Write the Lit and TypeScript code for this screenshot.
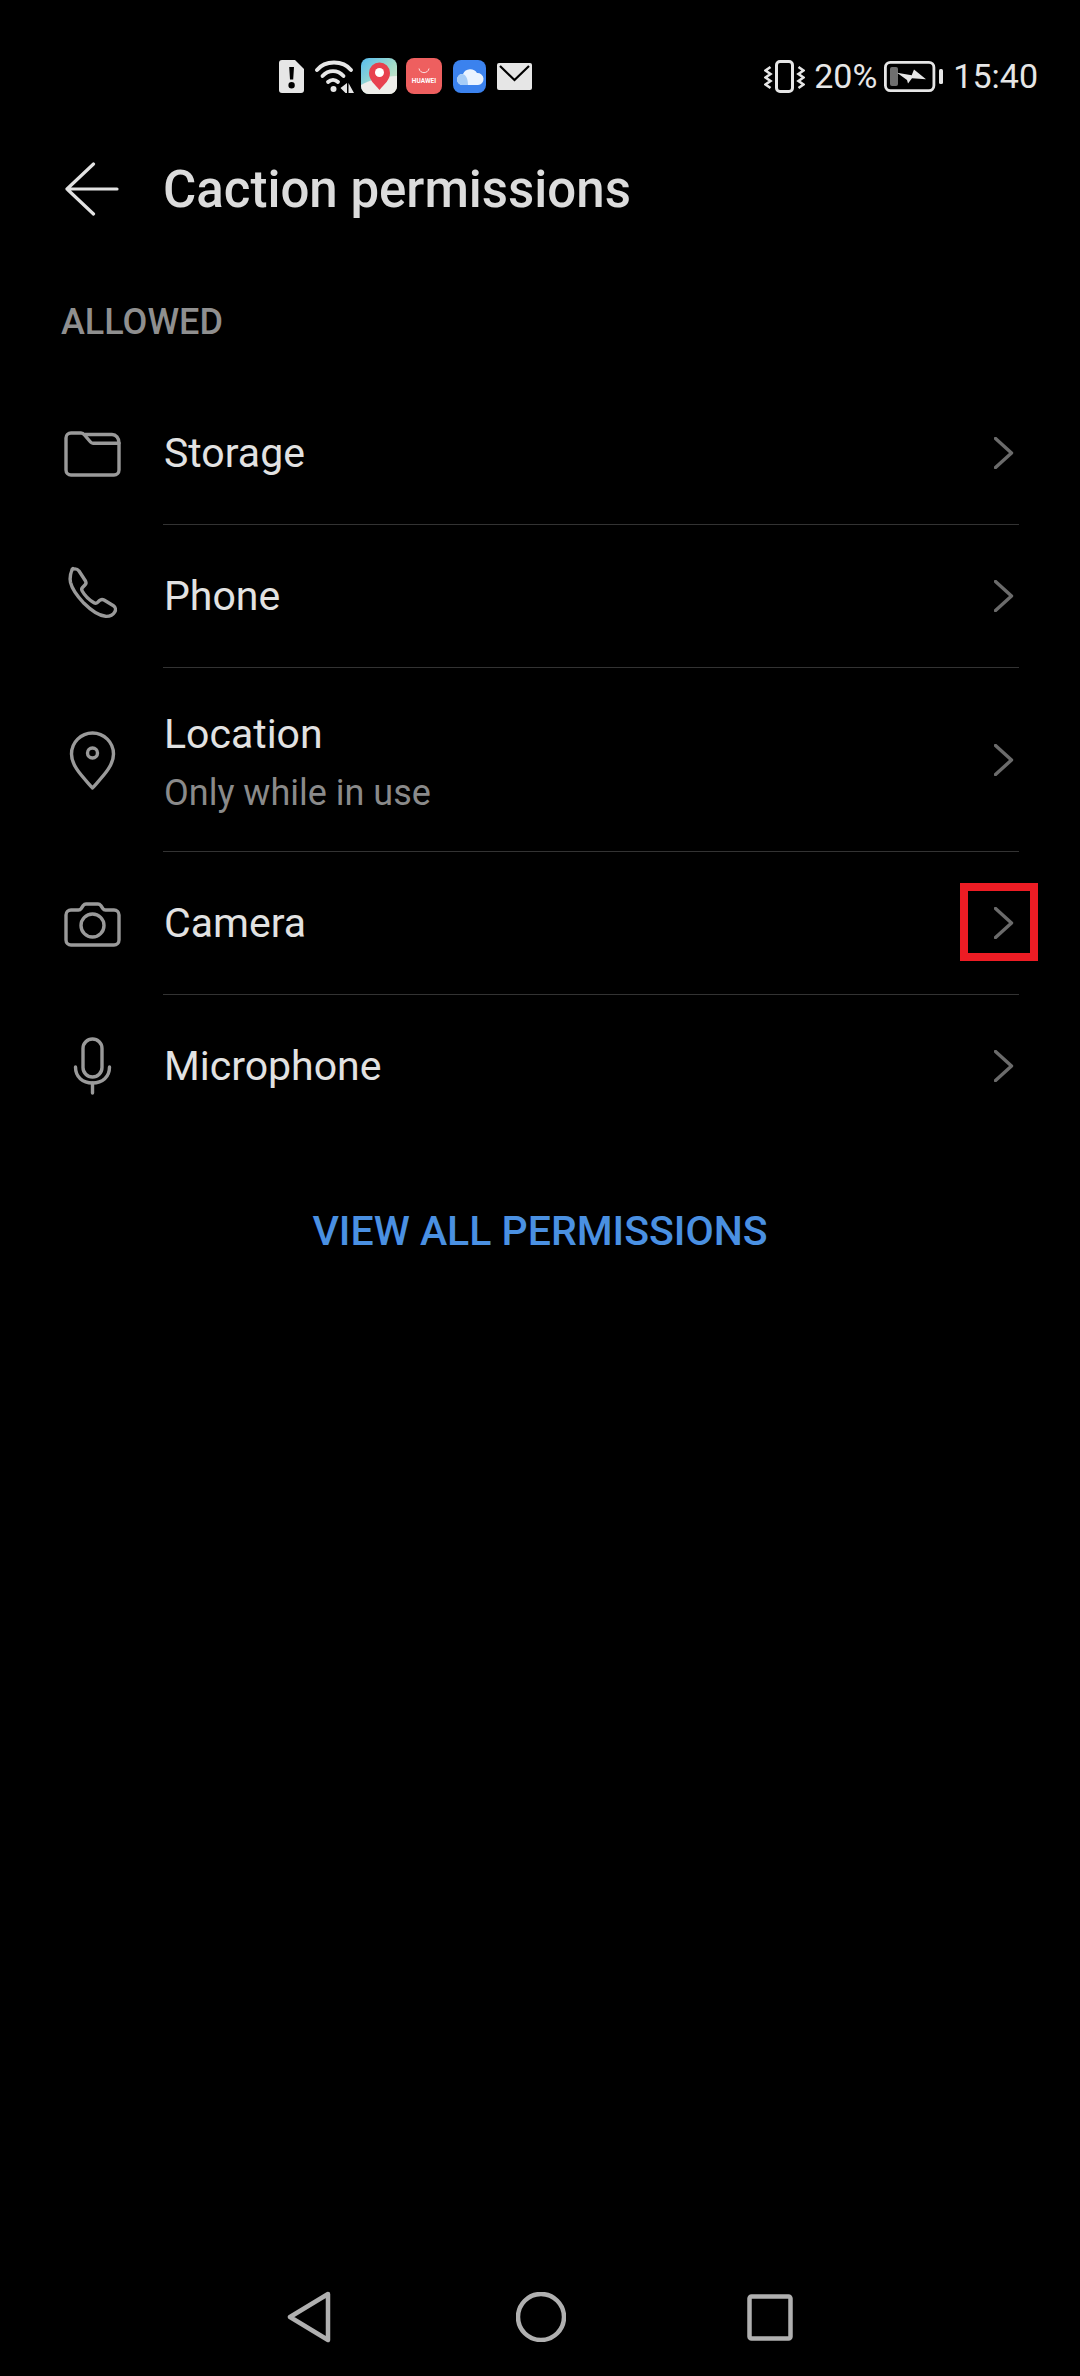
import { LitElement, css, html, svg } from 'lit'
import { customElement } from 'lit/decorators.js'

interface PermissionRow {
  label: string
  sub?: string
  icon: ReturnType<typeof svg>
  marked?: boolean
}

const ROWS: PermissionRow[] = [
  {
    label: 'Storage',
    icon: svg`<path d="M19 19h10c1.500 0 2.500.6 3.500 2l6 7c.8.9 1.500 1.200 2.500 1.200H67V56a5 5 0 0 1-5 5H19a5 5 0 0 1-5-5V24a5 5 0 0 1 5-5Z"/><path d="M33 20.500h27c4 0 7 3.500 7 8.500"/>`,
  },
  {
    label: 'Phone',
    icon: svg`<path transform="translate(-3 -7)" d="M23 19.500c2.500-1 5.500-.5 7 1.500l6.500 10c.8 1.500.5 3-.6 4l-2.400 2.500c-1 1-1 2.200-.3 3.500 2.800 5 6.300 8.500 11.800 11.800 1.400.8 2.600.6 3.600-.4l1.900-1.900c1.300-1.200 3-1.400 4.500-.5l9.500 5.800c2 1.300 2.500 4 1.300 6-1.800 3-5.300 4.800-9.300 4.500-6-.5-14-5.500-21.500-13-7-7.500-12-14.500-13.500-21-1-5 .3-11 2.500-13.800Z"/>`,
  },
  {
    label: 'Location',
    sub: 'Only while in use',
    icon: svg`<path d="M40.500 68C30 56 19.500 46 19.500 34a21 21 0 0 1 42 0C61.500 46 51 56 40.500 68Z"/><circle cx="40.500" cy="33" r="5"/>`,
  },
  {
    label: 'Camera',
    marked: true,
    icon: svg`<path d="M19 26h7.500c1.200 0 2-.5 2.700-1.500l2-3c.8-1 1.500-1.500 2.800-1.500h12c1.300 0 2 .5 2.800 1.500l2 3c.7 1 1.500 1.500 2.700 1.500H62a5 5 0 0 1 5 5V56a5 5 0 0 1-5 5H19a5 5 0 0 1-5-5V31a5 5 0 0 1 5-5Z"/><circle cx="40.500" cy="41.500" r="11.500"/>`,
  },
  {
    label: 'Microphone',
    icon: svg`<rect x="31" y="13" width="19" height="38" rx="9.500"/><path d="M23.500 41c0 10 7 16 17 16s17-6 17-16"/><path d="M40.500 57v10"/>`,
  },
]

@customElement('app-root')
export class AppRoot extends LitElement {
  private _statusBar() {
    return html`
      <div class="status">
        <div class="status-left">
          <svg class="ic-alert" viewBox="0 0 25 33">
            <path fill="#e6e6e6" d="M3 0h13l9 9v21a3 3 0 0 1-3 3H3a3 3 0 0 1-3-3V3a3 3 0 0 1 3-3Z"/>
            <path fill="#000" d="M10.200 7h4.800l-.8 12.500h-3.200ZM12.600 22a3.200 3.200 0 1 1 0 6.400 3.200 3.200 0 0 1 0-6.400Z"/>
          </svg>
          <svg class="ic-wifi" viewBox="0 0 39 33" fill="none" stroke="#e6e6e6" stroke-width="3.800" stroke-linecap="round">
            <path d="M2 10C10 0 28 0 36 10"/>
            <path d="M7.500 16c6-6.500 15-6.500 21 0"/>
            <path d="M13 22c3-2.800 7-2.800 10 0"/>
            <circle cx="18.500" cy="29" r="3" fill="#e6e6e6" stroke="none"/>
            <path fill="#e6e6e6" stroke="none" d="M32 23v10h-1.500l-5-5ZM33.500 23l5.500 10h-5.500Z"/>
          </svg>
          <svg class="ic-app maps" viewBox="0 0 36 36">
            <defs>
              <linearGradient id="mapbg" x1="0" y1="0" x2="1" y2="1">
                <stop offset="0" stop-color="#56bdf0"/><stop offset="0.55" stop-color="#a4dcc8"/><stop offset="1" stop-color="#e9e6c8"/>
              </linearGradient>
            </defs>
            <rect width="36" height="36" rx="8" fill="url(#mapbg)"/>
            <path d="M0 27c8-5 24-9 36-9v10a8 8 0 0 1-8 8H8a8 8 0 0 1-8-8Z" fill="#eeeeea"/>
            <path d="M18.500 32c-5-6-10.500-10-10.500-17a10.500 10.500 0 0 1 21 0c0 7-5.500 11-10.500 17Z" fill="#e8414e"/>
            <circle cx="18.500" cy="14.500" r="4.500" fill="#fff"/>
          </svg>
          <div class="app-huawei">
            <svg viewBox="0 0 12 6" class="bag"><path d="M1 .5c1 5.500 9 5.500 10 0" fill="none" stroke="#fff" stroke-width=".8"/></svg>
            <span>HUAWEI</span>
          </div>
          <svg class="ic-app cloud" viewBox="0 0 33 33">
            <rect width="33" height="33" rx="8" fill="#3b82ee"/>
            <path d="M10 25a5.500 5.500 0 0 1-1-11h1a8 8 0 0 1 14-1 6 6 0 0 1 1 12Z" fill="#eaf3ff"/>
            <path d="M10 25a5.500 5.500 0 0 1-1-11c3.500 0 6 4 6 11Z" fill="#a6ccf7"/>
          </svg>
          <svg class="ic-mail" viewBox="0 0 35 27">
            <rect width="35" height="27" rx="2" fill="#e6e6e6"/>
            <path d="M3 3l14.500 14L32 3" fill="none" stroke="#000" stroke-width="2.200"/>
          </svg>
        </div>
        <div class="status-right">
          <svg class="ic-vibrate" viewBox="0 0 41 33" fill="none" stroke="#e6e6e6">
            <rect x="12.500" y="1.500" width="16" height="30" rx="3.500" stroke-width="3"/>
            <path d="M6.500 7L1.500 10.500 6.500 14 1.500 17.500 6.500 21 1.500 24.500 6.500 28" stroke-width="2.600"/>
            <path d="M34.500 7l5 3.500-5 3.500 5 3.500-5 3.500 5 3.500-5 3.500" stroke-width="2.600"/>
          </svg>
          <span class="pct">20%</span>
          <svg class="ic-batt" viewBox="0 0 61 31">
            <rect x="1.400" y="1.400" width="48.500" height="28.200" rx="5" fill="none" stroke="#e6e6e6" stroke-width="2.800"/>
            <rect x="6" y="6" width="8" height="19" rx="2" fill="#6f6f6f"/>
            <path d="M13 11.700l14.700 2.600L30 8.500l12 9.800-14-1-4 5.200-1-3.500Z" fill="#e6e6e6"/>
            <rect x="55" y="8" width="4" height="15" rx="1.500" fill="#e6e6e6"/>
          </svg>
          <span class="time">15:40</span>
        </div>
      </div>
    `
  }

  private _row(row: PermissionRow, last: boolean) {
    return html`
      <div class="row ${row.sub ? 'tall' : ''}">
        <div class="icon-cell">
          <svg class="row-icon" viewBox="0 0 80 80">${row.icon}</svg>
        </div>
        <div class="row-body ${last ? 'last' : ''}">
          <div class="row-text">
            <div class="row-label">${row.label}</div>
            ${row.sub ? html`<div class="row-sub">${row.sub}</div>` : ''}
          </div>
          <div class="chev-wrap">
            <svg class="chev" viewBox="0 0 20 32"><path d="M1.500 1.500l16 14.500-16 14.500"/></svg>
            ${row.marked ? html`<div class="mark"></div>` : ''}
          </div>
        </div>
      </div>
    `
  }

  render() {
    return html`
      ${this._statusBar()}
      <header class="bar">
        <svg class="back" viewBox="0 0 54 54"><path d="M28.500 2L2 27l26.500 25M2 27h50"/></svg>
        <h1>Caction permissions</h1>
      </header>
      <div class="section">ALLOWED</div>
      <div class="list">
        ${ROWS.map((r, i) => this._row(r, i === ROWS.length - 1))}
      </div>
      <div class="view-all">VIEW ALL PERMISSIONS</div>
      <div class="spacer"></div>
      <nav class="nav">
        <svg class="nav-back" viewBox="0 0 44 52"><path d="M41 3L3 26l38 23Z"/></svg>
        <svg class="nav-home" viewBox="0 0 50 50"><circle cx="25" cy="25" r="23"/></svg>
        <svg class="nav-rect" viewBox="0 0 46 47"><rect x="2.500" y="2.500" width="41" height="42" rx="2"/></svg>
      </nav>
    `
  }

  static styles = css`
    :host {
      display: flex;
      flex-direction: column;
      width: 1080px;
      height: 2376px;
      background: #000;
      font-family: Roboto, sans-serif;
      color: #e2e2e2;
      overflow: hidden;
    }

    .status {
      display: flex;
      justify-content: space-between;
      align-items: center;
      height: 152px;
      padding: 0 42px 0 279px;
      flex: none;
    }
    .status-left,
    .status-right {
      display: flex;
      align-items: center;
    }
    .ic-alert { width: 25px; height: 33px; margin-right: 11px; }
    .ic-wifi { width: 39px; height: 33px; margin-right: 7px; }
    .ic-app.maps { width: 36px; height: 36px; margin-right: 9px; }
    .app-huawei {
      width: 36px;
      height: 36px;
      margin-right: 11px;
      border-radius: 8px;
      background: #ee5f5f;
      display: flex;
      flex-direction: column;
      align-items: center;
      justify-content: center;
      gap: 4px;
      color: #fff;
    }
    .app-huawei .bag { width: 12px; height: 6px; }
    .app-huawei span { font-size: 6.500px; font-weight: 700; line-height: 7px; }
    .ic-app.cloud { width: 33px; height: 33px; margin-right: 11px; }
    .ic-mail { width: 35px; height: 27px; }
    .ic-vibrate { width: 41px; height: 33px; margin-right: 9px; }
    .pct, .time { font-size: 34px; line-height: 40px; color: #e6e6e6; }
    .ic-batt { width: 61px; height: 31px; margin: 0 8px 0 7px; }

    .bar {
      display: flex;
      align-items: center;
      height: 74px;
      padding-left: 65px;
      flex: none;
    }
    .back {
      width: 54px;
      height: 54px;
      margin-right: 44px;
      fill: none;
      stroke: #e2e2e2;
      stroke-width: 3.200;
      stroke-linecap: round;
      stroke-linejoin: round;
    }
    h1 {
      margin: 0;
      font-size: 51px;
      font-weight: 500;
      color: #dcdcdc;
    }

    .section {
      padding: 74px 0 0 61px;
      font-size: 36px;
      line-height: 44px;
      font-weight: 500;
      color: #8f8f8f;
    }

    .list {
      margin-top: 38px;
      padding-left: 52px;
    }
    .row {
      display: flex;
      align-items: stretch;
    }
    .icon-cell {
      flex: none;
      display: flex;
      align-items: center;
      width: 80px;
      margin-right: 31px;
    }
    .row-icon {
      display: block;
      width: 80px;
      height: 80px;
      fill: none;
      stroke: #9a9a9a;
      stroke-width: 3.400;
      stroke-linecap: round;
      stroke-linejoin: round;
    }
    .row-body {
      flex: 1;
      display: flex;
      align-items: center;
      justify-content: space-between;
      height: 142px;
      margin-right: 61px;
      border-bottom: 1px solid #333;
    }
    .row.tall .row-body { height: 183px; }
    .row.tall .row-text { padding-top: 5px; }
    .row-body.last { border-bottom: none; }
    .row-text { padding-left: 1px; }
    .row-label {
      font-size: 41px;
      line-height: 48px;
      color: #e2e2e2;
    }
    .row-sub {
      margin-top: 14px;
      font-size: 36px;
      line-height: 42px;
      color: #8a8a8a;
    }
    .chev-wrap {
      position: relative;
      width: 20px;
      height: 32px;
      margin-right: 5px;
    }
    .chev {
      display: block;
      width: 20px;
      height: 32px;
      fill: none;
      stroke: #6b6b6b;
      stroke-width: 3.400;
      stroke-linecap: round;
      stroke-linejoin: round;
    }
    .mark {
      position: absolute;
      left: -34px;
      top: -24px;
      width: 78px;
      height: 78px;
      box-sizing: border-box;
      border: 8px solid #ed1c24;
    }

    .view-all {
      margin-top: 70px;
      text-align: center;
      font-size: 41px;
      line-height: 48px;
      font-weight: 500;
      color: #4a90e2;
    }
    .spacer { flex: 1; }
    .nav {
      flex: none;
      display: flex;
      align-items: center;
      justify-content: center;
      height: 100px;
      margin-bottom: 9px;
      fill: none;
      stroke: #b0b0b0;
      stroke-width: 4.500;
      stroke-linejoin: round;
    }
    .nav-back { width: 44px; height: 52px; margin-right: 185px; }
    .nav-home { width: 50px; height: 50px; margin-right: 181px; }
    .nav-rect { width: 46px; height: 47px; }
  `
}
